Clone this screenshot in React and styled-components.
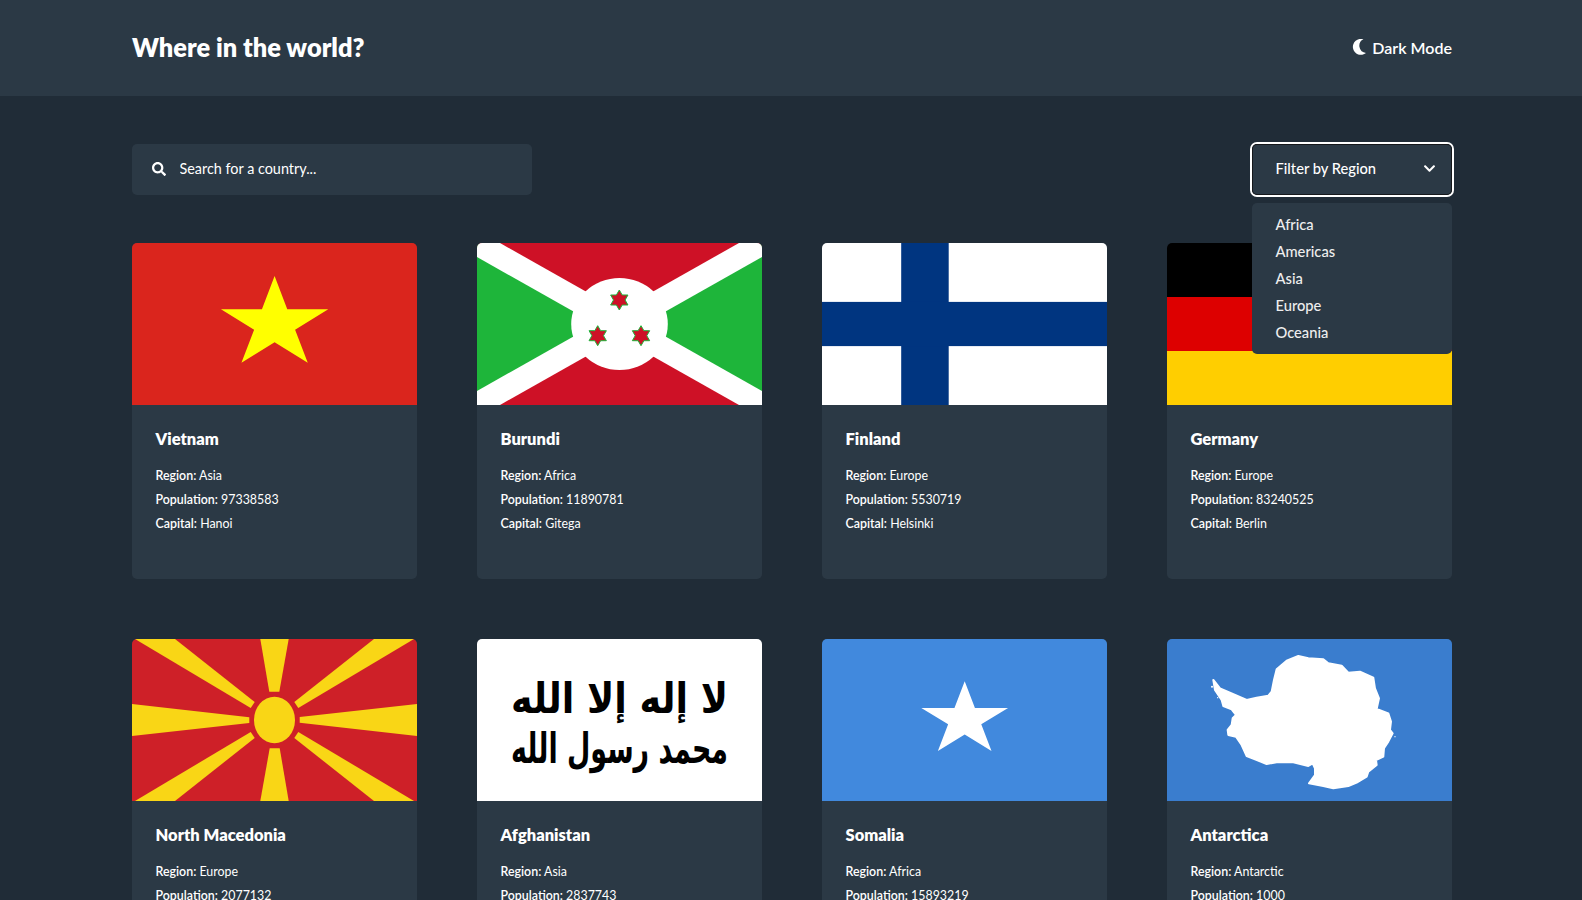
import React, { useState } from 'react';
import styled, { createGlobalStyle } from 'styled-components';
import { FaSearch, FaChevronDown } from 'react-icons/fa';

const GlobalStyle = createGlobalStyle`
  html, body {
    margin: 0;
    padding: 0;
    background: #202c37;
    color: #fff;
    font-family: Lato, "Noto Sans", sans-serif;
  }
  * {
    box-sizing: border-box;
  }
`;

const REGIONS = ['Africa', 'Americas', 'Asia', 'Europe', 'Oceania'];

const starPoints = (cx, cy, rx, ry, count = 5, inner = 0.382) => {
  const points = [];
  for (let i = 0; i < count * 2; i++) {
    const angle = -Math.PI / 2 + (i * Math.PI) / count;
    const r = i % 2 === 0 ? 1 : inner;
    points.push(`${cx + rx * r * Math.cos(angle)},${cy + ry * r * Math.sin(angle)}`);
  }
  return points.join(' ');
};

const MoonIcon = () => (
  <svg width="14" height="16" viewBox="0 0 14 16" fill="currentColor">
    <path d="M11.5.3A8 8 0 1 0 14 14A7.2 7.2 0 0 1 11.5.3Z" />
  </svg>
);

const FlagSvg = ({ children }) => (
  <FlagImage viewBox="0 0 285 162" preserveAspectRatio="none">
    {children}
  </FlagImage>
);

const VietnamFlag = () => (
  <FlagSvg>
    <rect width="285" height="162" fill="#da251d" />
    <polygon points={starPoints(142.6, 81, 56.4, 48)} fill="#ff0" />
  </FlagSvg>
);

const BurundiFlag = () => (
  <FlagSvg>
    <rect width="285" height="162" fill="#ce1126" />
    <polygon points="0,0 142.5,81 0,162" fill="#1eb53a" />
    <polygon points="285,0 142.5,81 285,162" fill="#1eb53a" />
    <polygon points="0,0 23,0 285,148 285,162 262,162 0,14" fill="#fff" />
    <polygon points="285,0 262,0 0,148 0,162 23,162 285,14" fill="#fff" />
    <ellipse cx="142.5" cy="81" rx="48.3" ry="46" fill="#fff" />
    {[[142.3, 57], [120.7, 92.7], [164, 92.7]].map(([x, y]) => (
      <polygon
        key={x}
        points={starPoints(x, y, 10, 10, 6, 0.58)}
        fill="#ce1126"
        stroke="#1eb53a"
        strokeWidth="1"
      />
    ))}
  </FlagSvg>
);

const FinlandFlag = () => (
  <FlagSvg>
    <rect width="285" height="162" fill="#fff" />
    <rect x="79.2" width="47.5" height="162" fill="#003580" />
    <rect y="58.9" width="285" height="44.2" fill="#003580" />
  </FlagSvg>
);

const GermanyFlag = () => (
  <FlagSvg>
    <rect width="285" height="54" fill="#000" />
    <rect y="54" width="285" height="54" fill="#d00" />
    <rect y="108" width="285" height="54" fill="#ffce00" />
  </FlagSvg>
);

const MacedoniaFlag = () => {
  const halfRays = [
    '128.3,0 156.7,0 147.3,52.7 137.3,52.7',
    '0,65 0,97 117.3,84 117.3,78.3',
    '3,0 43,0 122.7,63 118.7,69',
    '282,0 242,0 162.3,63 166.3,69',
  ];
  return (
    <FlagSvg>
      <rect width="285" height="162" fill="#ce2028" />
      {halfRays.map(points => (
        <g key={points} fill="#f9d616">
          <polygon points={points} />
          <polygon points={points} transform="rotate(180 142.5 81)" />
        </g>
      ))}
      <ellipse cx="142.5" cy="81" rx="20.5" ry="23.3" fill="#f9d616" />
    </FlagSvg>
  );
};

const AfghanistanFlag = () => (
  <FlagSvg>
    <rect width="285" height="162" fill="#fff" />
    <g fontFamily='"DejaVu Sans", sans-serif' fontWeight="700" fill="#000" textAnchor="middle" direction="rtl">
      <text x="142.5" y="74" fontSize="42" textLength="217" lengthAdjust="spacingAndGlyphs">
        لا إله إلا الله
      </text>
      <text x="142.5" y="124" fontSize="42" textLength="217" lengthAdjust="spacingAndGlyphs">
        محمد رسول الله
      </text>
    </g>
  </FlagSvg>
);

const SomaliaFlag = () => (
  <FlagSvg>
    <rect width="285" height="162" fill="#4189dd" />
    <polygon points={starPoints(142.7, 80.8, 45.6, 38.5)} fill="#fff" />
  </FlagSvg>
);

const ANTARCTICA_OUTLINE =
  'M160 150 L180 175 L215 190 L260 210 L290 203 L325 197 L335 185 L342 150 L350 118 L380 92 L415 78 L445 85 L490 88 L505 100 L545 107 L565 128 L600 125 L640 143 L645 175 L657 205 L650 237 L685 250 L693 275 L690 300 L698 310 L685 335 L672 355 L670 380 L648 390 L650 405 L625 425 L620 440 L590 458 L565 468 L520 475 L490 468 L447 460 L465 435 L465 415 L458 400 L445 408 L400 397 L350 397 L320 402 L285 388 L260 378 L245 345 L228 320 L205 315 L203 300 L215 285 L218 265 L228 255 L215 238 L190 228 L185 210 L165 180 Z';

const AntarcticaFlag = () => (
  <FlagSvg>
    <rect width="285" height="162" fill="#3a7dce" />
    <g fill="#fff" transform="translate(-7 -9) scale(0.3333)">
      <path d={ANTARCTICA_OUTLINE} stroke="#fff" strokeWidth="6" strokeLinejoin="round" />
      <circle cx="156" cy="170" r="3" />
      <circle cx="173" cy="203" r="2" />
      <circle cx="705" cy="320" r="2" />
    </g>
  </FlagSvg>
);

const COUNTRIES = [
  { name: 'Vietnam', region: 'Asia', population: 97338583, capital: 'Hanoi', Flag: VietnamFlag },
  { name: 'Burundi', region: 'Africa', population: 11890781, capital: 'Gitega', Flag: BurundiFlag },
  { name: 'Finland', region: 'Europe', population: 5530719, capital: 'Helsinki', Flag: FinlandFlag },
  { name: 'Germany', region: 'Europe', population: 83240525, capital: 'Berlin', Flag: GermanyFlag },
  { name: 'North Macedonia', region: 'Europe', population: 2077132, capital: 'Skopje', Flag: MacedoniaFlag },
  { name: 'Afghanistan', region: 'Asia', population: 2837743, capital: 'Kabul', Flag: AfghanistanFlag },
  { name: 'Somalia', region: 'Africa', population: 15893219, capital: 'Mogadishu', Flag: SomaliaFlag },
  { name: 'Antarctica', region: 'Antarctic', population: 1000, capital: '', Flag: AntarcticaFlag },
];

const App = () => {
  const [open, setOpen] = useState(true);

  return (
    <Page>
      <GlobalStyle />
      <Header>
        <Title>Where in the world?</Title>
        <ThemeToggle>
          <MoonIcon />
          Dark Mode
        </ThemeToggle>
      </Header>
      <Main>
        <Toolbar>
          <SearchBox>
            <FaSearch size={14} />
            <SearchInput placeholder="Search for a country..." />
          </SearchBox>
          <FilterWrap>
            <FilterButton onClick={() => setOpen(!open)}>
              Filter by Region
              <FaChevronDown size={13} />
            </FilterButton>
            {open && (
              <FilterMenu>
                {REGIONS.map(region => (
                  <FilterOption key={region}>{region}</FilterOption>
                ))}
              </FilterMenu>
            )}
          </FilterWrap>
        </Toolbar>
        <CardGrid>
          {COUNTRIES.map(({ name, region, population, capital, Flag }) => (
            <Card key={name}>
              <Flag />
              <CardBody>
                <CardTitle>{name}</CardTitle>
                <InfoRow>
                  <b>Region:</b> {region}
                </InfoRow>
                <InfoRow>
                  <b>Population:</b> {population}
                </InfoRow>
                <InfoRow>
                  <b>Capital:</b> {capital}
                </InfoRow>
              </CardBody>
            </Card>
          ))}
        </CardGrid>
      </Main>
    </Page>
  );
};

const Page = styled.div`
  height: 100vh;
  overflow: hidden;
`;

const Header = styled.header`
  height: 96px;
  padding: 0 130px 2px 132px;
  display: flex;
  align-items: center;
  justify-content: space-between;
  background: #2b3945;
`;

const Title = styled.h1`
  margin: 0;
  font-size: 25.4px;
  font-weight: 800;
`;

const ThemeToggle = styled.button`
  display: flex;
  align-items: center;
  gap: 6px;
  padding: 0;
  border: 0;
  background: none;
  color: #fff;
  font: inherit;
  font-size: 16px;
  font-weight: 600;
`;

const Main = styled.main`
  padding: 48px 130px 48px 132px;
`;

const Toolbar = styled.div`
  display: flex;
  justify-content: space-between;
  align-items: flex-start;
  margin-bottom: 48px;
`;

const SearchBox = styled.label`
  width: 400px;
  height: 51px;
  padding: 0 0 2px 20px;
  display: flex;
  align-items: center;
  gap: 13.5px;
  background: #2b3945;
  border-radius: 5px;
`;

const SearchInput = styled.input`
  flex: 1;
  border: 0;
  outline: 0;
  padding: 0;
  background: none;
  color: #fff;
  font: inherit;
  font-size: 14.4px;

  &::placeholder {
    color: #fff;
    opacity: 1;
  }
`;

const FilterWrap = styled.div`
  position: relative;
  width: 200px;
`;

const FilterButton = styled.button`
  width: 100%;
  height: 51px;
  padding: 0 16px 3px 23.5px;
  display: flex;
  align-items: center;
  justify-content: space-between;
  border: 0;
  border-radius: 5px;
  background: #2b3945;
  color: #fff;
  font: inherit;
  font-size: 14.7px;
  font-weight: 500;
  box-shadow: inset 0 0 0 1px #16181b, 0 0 0 2px #fff;
`;

const FilterMenu = styled.ul`
  position: absolute;
  z-index: 1;
  top: 59px;
  left: 0;
  width: 100%;
  margin: 0;
  padding: 8px 23.5px;
  list-style: none;
  background: #2b3945;
  border-radius: 5px;
`;

const FilterOption = styled.li`
  height: 27px;
  line-height: 27px;
  font-size: 14.7px;
  font-weight: 500;
  color: #eee;
`;

const CardGrid = styled.div`
  display: grid;
  grid-template-columns: repeat(4, 285px);
  justify-content: space-between;
  row-gap: 60px;
`;

const Card = styled.article`
  height: 336px;
  background: #2b3945;
  border-radius: 5px;
  overflow: hidden;
`;

const FlagImage = styled.svg`
  display: block;
  width: 100%;
  height: 162px;
`;

const CardBody = styled.div`
  padding: 23px 24px 0 23.5px;
`;

const CardTitle = styled.h2`
  margin: 0 0 14px;
  font-size: 16.5px;
  line-height: 22px;
  font-weight: 800;
`;

const InfoRow = styled.p`
  margin: 0;
  font-size: 12.4px;
  line-height: 24px;
  font-weight: 400;

  b {
    font-weight: 600;
  }
`;

export default App;
